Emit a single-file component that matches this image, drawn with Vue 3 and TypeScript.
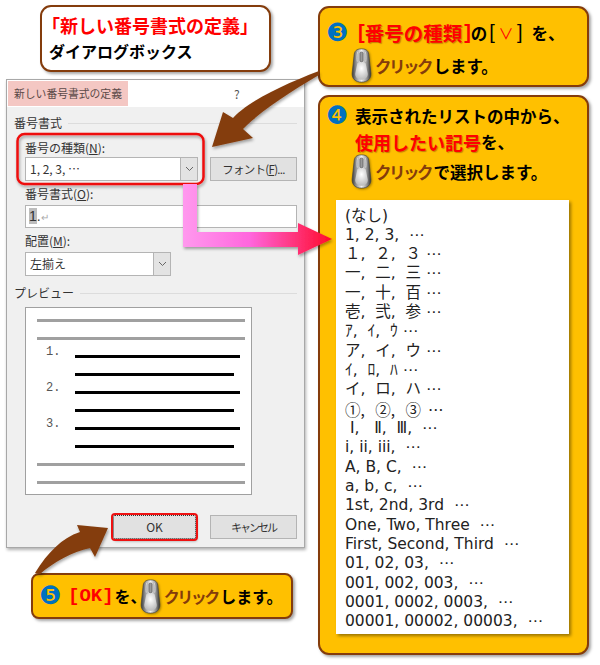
<script setup lang="ts">
const listItems = [
  '(なし)',
  '1, 2, 3,  ⋯',
  '１,  ２,  ３ ⋯',
  '一,  二,  三 ⋯',
  '一,  十,  百 ⋯',
  '壱,  弐,  参 ⋯',
  'ｱ,  ｲ,  ｳ ⋯',
  'ア,  イ,  ウ ⋯',
  'ｲ,  ﾛ,  ﾊ ⋯',
  'イ,  ロ,  ハ ⋯',
  '①,   ②,   ③  ⋯',
  ' Ⅰ,   Ⅱ,  Ⅲ,  ⋯',
  'i, ii, iii,  ⋯',
  'A, B, C,  ⋯',
  'a, b, c,  ⋯',
  '1st, 2nd, 3rd  ⋯',
  'One, Two, Three  ⋯',
  'First, Second, Third  ⋯',
  '01, 02, 03,  ⋯',
  '001, 002, 003,  ⋯',
  '0001, 0002, 0003,  ⋯',
  '00001, 00002, 00003,  ⋯',
]

const isCjkItem = (item: string) => item.includes('①')

const previewRows = [
  { kind: 'grey' },
  { kind: 'grey' },
  { kind: 'black', label: '1.' },
  { kind: 'black short' },
  { kind: 'black', label: '2.' },
  { kind: 'black short' },
  { kind: 'black', label: '3.' },
  { kind: 'black short' },
  { kind: 'grey' },
  { kind: 'grey' },
]
</script>

<template>
  <div class="page">
    <svg class="defs" width="0" height="0">
      <defs>
        <linearGradient id="mouseBody" x1="0" y1="0" x2="1" y2="0">
          <stop offset="0" stop-color="#3a3a3a" />
          <stop offset="0.2" stop-color="#8d8d8d" />
          <stop offset="0.5" stop-color="#f2f2f2" />
          <stop offset="0.8" stop-color="#8d8d8d" />
          <stop offset="1" stop-color="#333" />
        </linearGradient>
        <radialGradient id="mousePalm" cx="0.5" cy="0.35" r="0.7">
          <stop offset="0" stop-color="#fff" />
          <stop offset="1" stop-color="#b5b5b5" />
        </radialGradient>
        <linearGradient id="pinkRed" x1="0" y1="0" x2="1" y2="0">
          <stop offset="0" stop-color="#ff99ee" />
          <stop offset="0.45" stop-color="#ff66dd" />
          <stop offset="1" stop-color="#ff0a2a" />
        </linearGradient>
        <symbol id="mouse" viewBox="0 0 22 36">
          <path d="M11 .6C5.5 .6 3.4 3 3.2 8L1.2 26C.8 32 5 35.4 11 35.4S21.2 32 20.8 26L18.8 8C18.6 3 16.5 .6 11 .6Z" fill="url(#mouseBody)" stroke="#444" stroke-width="0.7" />
          <path d="M6.6 16C7 14 15 14 15.4 16L17.6 27C17.6 31 14 33 11 33S4.4 31 4.4 27Z" fill="url(#mousePalm)" />
          <path d="M7 3.5C6 8 6 11 6.6 14M15 3.5C16 8 16 11 15.4 14" fill="none" stroke="#e4e4e4" stroke-width="0.7" />
          <rect x="9.4" y="4" width="3.2" height="10" rx="1.3" fill="#9a9a9a" stroke="#444" stroke-width="0.6" />
        </symbol>
      </defs>
    </svg>

    <div class="left">
      <div class="title-box">
        <div class="title-red">「新しい番号書式の定義」</div>
        <div class="title-black">ダイアログボックス</div>
      </div>

      <div class="dialog">
        <div class="titlebar">
          <span class="titlebar-text">新しい番号書式の定義</span>
          <span class="help">?</span>
        </div>
        <div class="dialog-body">
          <div class="group-head"><span>番号書式</span><i></i></div>
          <div class="field-label first">番号の種類(<u>N</u>):</div>
          <div class="row">
            <div class="select wide"><span>1, 2, 3, ⋯</span><b class="drop"><svg width="9" height="6" viewBox="0 0 9 6"><path d="M1 1L4.5 4.5L8 1" fill="none" stroke="#666" /></svg></b></div>
            <div class="btn font-btn">フォント(<u>F</u>)...</div>
          </div>
          <div class="field-label">番号書式(<u>O</u>):</div>
          <div class="format-input"><span class="caret-sel">1</span>.<em>↵</em></div>
          <div class="field-label">配置(<u>M</u>):</div>
          <div class="select narrow"><span>左揃え</span><b class="drop"><svg width="9" height="6" viewBox="0 0 9 6"><path d="M1 1L4.5 4.5L8 1" fill="none" stroke="#666" /></svg></b></div>
          <div class="group-head preview-head"><span>プレビュー</span><i></i></div>
          <div class="preview">
            <div v-for="(row, i) in previewRows" :key="i" class="preview-row" :class="row.kind">
              <span v-if="row.label" class="num">{{ row.label }}</span>
              <i></i>
            </div>
          </div>
          <div class="actions">
            <div class="btn ok">OK</div>
            <div class="btn cancel">キャンセル</div>
          </div>
        </div>
      </div>

      <div class="ok-box">
        <span class="circled">❺</span>
        <span class="red ok-mark">[OK]</span><span>を、</span>
        <svg class="mouse m-ok"><use href="#mouse" /></svg>
        <span class="brown">クリック</span><span>します。</span>
      </div>
    </div>

    <div class="right">
      <div class="card card-top">
        <div class="line"><span class="circled">❸</span><span class="br red open">[</span><span class="red big">番号の種類</span><span class="br red close">]</span><span>の</span><span class="br open-black">[</span><span class="vee red">∨</span><span class="br">]</span><span class="wo">を、</span></div>
        <div class="line indent"><svg class="mouse"><use href="#mouse" /></svg><span class="brown">クリック</span>します。</div>
      </div>
      <div class="card card-main">
        <div class="line l1"><span class="circled">❹</span>表示されたリストの中から、</div>
        <div class="line l2"><span class="red mid">使用したい記号</span>を、</div>
        <div class="line l3 indent"><svg class="mouse"><use href="#mouse" /></svg><span class="brown">クリック</span>で選択します。</div>
        <ul class="list">
          <li v-for="item in listItems" :key="item" :class="{ cjk: isCjkItem(item) }">{{ item }}</li>
        </ul>
      </div>
    </div>

    <!-- annotation overlay -->
    <svg class="overlay" width="600" height="665" viewBox="0 0 600 665">
      <defs>
        <filter id="arrowShadow" x="-10%" y="-10%" width="130%" height="130%">
          <feDropShadow dx="1" dy="2" stdDeviation="1.5" flood-color="#000" flood-opacity="0.35" />
        </filter>
      </defs>
      <rect x="17.5" y="134" width="186" height="50" rx="7" fill="none" stroke="#ee1111" stroke-width="2.5" filter="url(#arrowShadow)" />
      <path d="M319 71C285 84 250 100 233 118L223 112L212 147L253 138L243 129C262 110 290 92 319 75Z" fill="#843c0c" filter="url(#arrowShadow)" />
      <path d="M183 184H197V232H298V223L332 239L298 255V247H183Z" fill="url(#pinkRed)" filter="url(#arrowShadow)" />
      <path d="M35 573C48 552 62 538 80 532L77 525L108 528L95 557L90 548C72 552 54 562 40 574Z" fill="#843c0c" filter="url(#arrowShadow)" />
    </svg>
  </div>
</template>

<style scoped>
.page {
  position: relative;
  width: 600px;
  height: 665px;
  display: flex;
  overflow: hidden;
  background: #fff;
  font-family: "Noto Sans CJK JP", sans-serif;
  color: #000;
}

.defs {
  position: absolute;
}

.overlay {
  position: absolute;
  left: 0;
  top: 0;
  pointer-events: none;
}

.left {
  width: 312px;
  flex: none;
  margin-right: 6px;
  padding: 5px 0 0 6px;
  box-sizing: border-box;
}

.title-box {
  width: 231px;
  height: 67px;
  margin-left: 34px;
  box-sizing: border-box;
  border: 2.5px solid #843c0c;
  border-radius: 11px;
  background: #fff;
  box-shadow: 2px 2px 3px rgba(0, 0, 0, 0.35);
  padding: 3px 0 0 0;
  font-weight: 700;
}

.title-red {
  color: #f00;
  font-size: 18px;
  line-height: 30px;
  white-space: nowrap;
}

.title-black {
  font-size: 16px;
  line-height: 22px;
  margin-left: 7px;
}

.dialog {
  width: 299px;
  height: 469px;
  margin-top: 7px;
  box-sizing: border-box;
  border: 1px solid #a8a8a8;
  background: #f0f0f0;
  box-shadow: 1px 2px 3px rgba(0, 0, 0, 0.3);
  color: #333;
  font-size: 12px;
}

.titlebar {
  height: 27px;
  background: #fff;
  display: flex;
  align-items: center;
  padding-left: 1px;
}

.titlebar-text {
  width: 120px;
  height: 25px;
  line-height: 25px;
  padding-left: 6px;
  box-sizing: border-box;
  background: #f4c7c3;
  color: #5b4a48;
  font-size: 10.8px;
  white-space: nowrap;
}

.help {
  margin-left: 106px;
  color: #555;
}

.dialog-body {
  padding: 8px 7px 0 7px;
}

.group-head {
  display: flex;
  align-items: center;
  gap: 6px;
  height: 16px;
  line-height: 16px;
}

.group-head i {
  flex: 1;
  height: 1px;
  background: #dcdcdc;
}

.preview-head {
  margin-top: 9px;
}

.field-label {
  margin: 6px 0 0 11px;
  height: 18px;
  line-height: 14px;
}

.field-label.first {
  margin-top: 8px;
  line-height: 17px;
}

.row {
  display: flex;
  margin-left: 11px;
  gap: 12px;
}

.select {
  height: 24px;
  display: flex;
  box-sizing: border-box;
  border: 1px solid #b4b4b4;
  background: #fff;
  line-height: 22px;
  padding-left: 4px;
}

.select span {
  flex: 1;
}

.select.wide {
  width: 173px;
}

.select.narrow {
  width: 146px;
  margin-left: 11px;
}

.drop {
  width: 16px;
  background: #e3e3e3;
  border-left: 1px solid #b4b4b4;
  display: flex;
  align-items: center;
  justify-content: center;
}

.btn {
  width: 87px;
  height: 24px;
  box-sizing: border-box;
  border: 1px solid #b4b4b4;
  background: #e1e1e1;
  text-align: center;
  line-height: 22px;
  white-space: nowrap;
}

.font-btn {
  font-size: 11.5px;
  letter-spacing: -0.7px;
}

.cancel {
  font-size: 11px;
  letter-spacing: -2px;
}

.format-input {
  width: 272px;
  height: 23px;
  margin-left: 11px;
  box-sizing: border-box;
  border: 1px solid #b4b4b4;
  background: #fff;
  padding-left: 3px;
  line-height: 21px;
  font-family: "Liberation Sans", sans-serif;
  font-size: 14px;
}

.caret-sel {
  background: #bdbdbd;
}

.format-input em {
  color: #aaa;
  font-style: normal;
  font-size: 10px;
}

.preview {
  width: 227px;
  height: 188px;
  margin: 6px 0 0 11px;
  box-sizing: border-box;
  border: 1px solid #a0a0a0;
  background: #fff;
  padding: 3px 6px 0 11px;
}

.preview-row {
  position: relative;
  height: 18px;
  display: flex;
  align-items: center;
}

.preview-row i {
  display: block;
  width: 100%;
  height: 3px;
  background: #a0a0a0;
}

.preview-row.black i {
  margin-left: 38px;
  width: 165px;
  background: #000;
}

.preview-row.short i {
  width: 159px;
}

.num {
  position: absolute;
  left: 9px;
  top: -2px;
  font-family: "Liberation Mono", monospace;
  font-size: 12px;
  color: #555;
}

.actions {
  display: flex;
  gap: 14px;
  margin: 20px 0 0 99px;
}

.btn.ok {
  width: 83px;
  border: 1px dotted #333;
  background: #e1e1e1;
  outline: 2.5px solid #ee1111;
  outline-offset: 0;
  border-radius: 2px;
  box-shadow: 1px 2px 3px rgba(0, 0, 0, 0.4);
}

.ok-box {
  width: 262px;
  height: 46px;
  margin: 25px 0 0 25px;
  box-sizing: border-box;
  border: 2.5px solid #843c0c;
  border-radius: 8px;
  background: #ffc000;
  box-shadow: 2px 2px 3px rgba(0, 0, 0, 0.35);
  display: flex;
  align-items: center;
  padding-left: 6px;
  font-size: 16px;
  font-weight: 700;
  white-space: nowrap;
}

.ok-mark {
  font-family: "Liberation Mono", monospace;
  font-size: 19px;
  margin-right: 1px;
}

.right {
  flex: none;
  width: 271px;
  padding-top: 6px;
}

.card {
  box-sizing: border-box;
  border: 2.5px solid #843c0c;
  border-radius: 11px;
  background: #ffc000;
  box-shadow: 2px 2px 3px rgba(0, 0, 0, 0.35);
  font-size: 16.5px;
  font-weight: 700;
  padding-left: 6px;
}

.card-top {
  height: 81px;
  padding-top: 8px;
}

.card-main {
  height: 560px;
  margin-top: 8px;
  padding-top: 4.5px;
}

.line {
  display: flex;
  align-items: center;
  height: 33px;
  white-space: nowrap;
}

.line.l1 {
  height: 28px;
}

.line.l2 {
  height: 24px;
  padding-left: 29px;
}

.line.l3 {
  height: 36px;
}

.line.indent {
  padding-left: 25px;
}

.br {
  font-family: "Liberation Sans", sans-serif;
  font-weight: 400;
  font-size: 20px;
}

.br.red {
  font-weight: 700;
}

.open {
  margin-left: 3px;
}

.close {
  margin: 0 0 0 2px;
}

.open-black {
  margin-left: 2px;
}

.big {
  font-size: 19.5px;
}

.mid {
  font-size: 18px;
}

.red.big,
.red.mid {
  text-shadow: 1px 1px 1px rgba(120, 50, 0, 0.45);
}

.vee {
  display: inline-block;
  width: 22px;
  text-align: center;
  font-size: 15px;
  font-weight: 400;
}

.wo {
  margin-left: 9px;
}

.circled {
  color: #0070c0;
  font-size: 25px;
  line-height: 28px;
  width: 29px;
  flex: none;
  font-family: "DejaVu Sans", sans-serif;
  font-weight: 400;
}

.red {
  color: #f00;
}

.brown {
  color: #843c0c;
  letter-spacing: -2.5px;
  margin: 0 2.5px 0 3px;
}

.mouse {
  width: 21px;
  height: 35px;
  flex: none;
  filter: drop-shadow(1px 1px 1px rgba(80, 60, 0, 0.5));
}

.m-ok {
  margin: 0 0 0 -7px;
}

.list {
  list-style: none;
  margin: 10px 0 0 10px;
  padding: 7px 0 0 9px;
  width: 233px;
  height: 434px;
  box-sizing: border-box;
  background: #fff;
  box-shadow: 2px 2px 3px rgba(0, 0, 0, 0.4);
  font-family: "DejaVu Sans", "Noto Sans CJK JP", sans-serif;
  font-size: 15.5px;
  font-weight: 400;
  line-height: 19.33px;
  color: #222;
  white-space: pre;
}

.list li {
  height: 19.33px;
}

.list li.cjk {
  font-family: "Noto Sans CJK JP", sans-serif;
}

u {
  text-underline-offset: 1px;
}
</style>
